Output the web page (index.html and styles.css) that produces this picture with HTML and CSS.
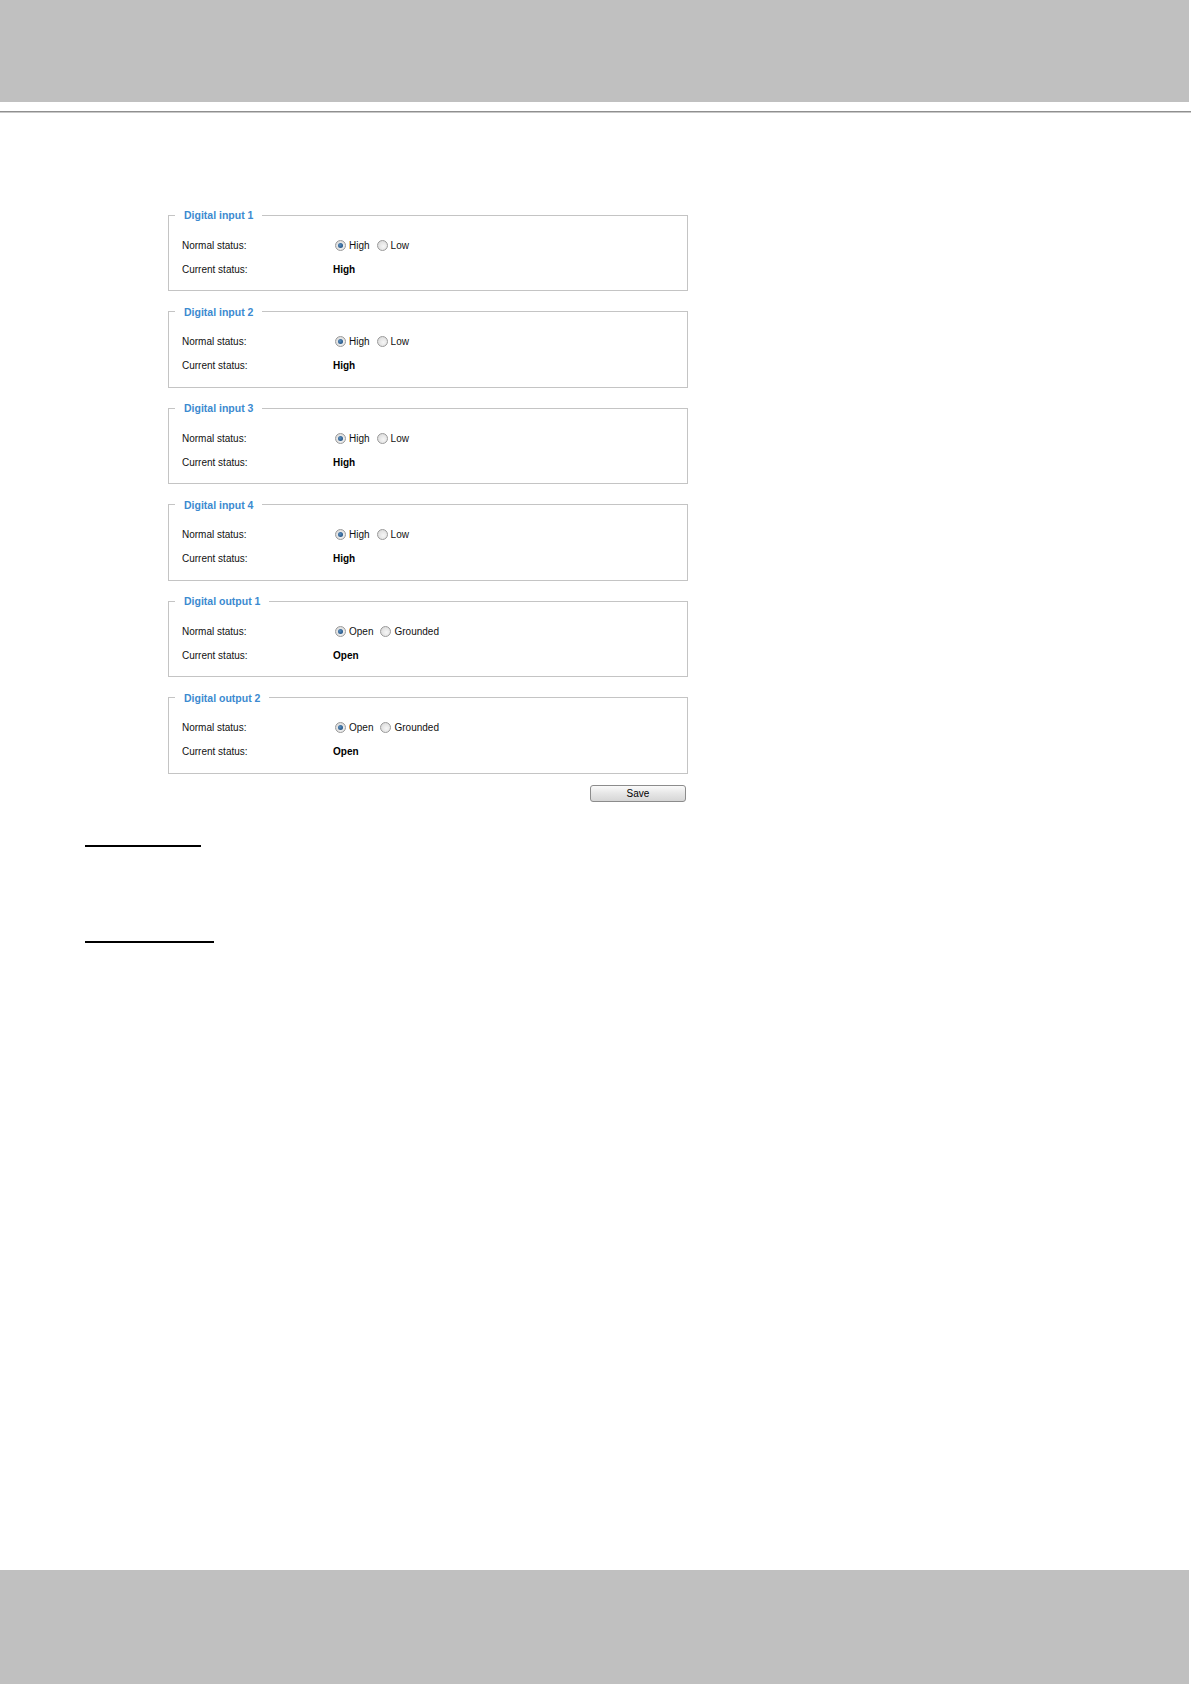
FILE: index.html
```html
<!DOCTYPE html>
<html>

<head>
	<meta charset="utf-8" />
	<title>Digital input / output</title>
	<link rel="stylesheet" href="styles.css">
</head>

<body>
	<div class="page">
		<div class="top"></div>
		<div class="rule"></div>

		<div class="main">
			<div class="io">
				<fieldset>
					<legend>Digital input 1</legend>
					<div class="rows">
						<div class="row"><span class="lbl">Normal status:</span>
							<span class="opt"><span class="radio on"></span>High</span>
							<span class="opt"><span class="radio"></span>Low</span>
						</div>
						<div class="row"><span class="lbl">Current status:</span><b>High</b></div>
					</div>
				</fieldset>
				<fieldset>
					<legend>Digital input 2</legend>
					<div class="rows">
						<div class="row"><span class="lbl">Normal status:</span>
							<span class="opt"><span class="radio on"></span>High</span>
							<span class="opt"><span class="radio"></span>Low</span>
						</div>
						<div class="row"><span class="lbl">Current status:</span><b>High</b></div>
					</div>
				</fieldset>
				<fieldset>
					<legend>Digital input 3</legend>
					<div class="rows">
						<div class="row"><span class="lbl">Normal status:</span>
							<span class="opt"><span class="radio on"></span>High</span>
							<span class="opt"><span class="radio"></span>Low</span>
						</div>
						<div class="row"><span class="lbl">Current status:</span><b>High</b></div>
					</div>
				</fieldset>
				<fieldset>
					<legend>Digital input 4</legend>
					<div class="rows">
						<div class="row"><span class="lbl">Normal status:</span>
							<span class="opt"><span class="radio on"></span>High</span>
							<span class="opt"><span class="radio"></span>Low</span>
						</div>
						<div class="row"><span class="lbl">Current status:</span><b>High</b></div>
					</div>
				</fieldset>
				<fieldset>
					<legend>Digital output 1</legend>
					<div class="rows">
						<div class="row"><span class="lbl">Normal status:</span>
							<span class="opt"><span class="radio on"></span>Open</span>
							<span class="opt"><span class="radio"></span>Grounded</span>
						</div>
						<div class="row"><span class="lbl">Current status:</span><b>Open</b></div>
					</div>
				</fieldset>
				<fieldset>
					<legend>Digital output 2</legend>
					<div class="rows">
						<div class="row"><span class="lbl">Normal status:</span>
							<span class="opt"><span class="radio on"></span>Open</span>
							<span class="opt"><span class="radio"></span>Grounded</span>
						</div>
						<div class="row"><span class="lbl">Current status:</span><b>Open</b></div>
					</div>
				</fieldset>
				<div class="actions">
					<button type="button">Save</button>
				</div>
			</div>

			<div class="head h1"></div>
			<div class="head h2"></div>
		</div>

		<div class="bottom"></div>
	</div>
</body>

</html>
```

FILE: styles.css
```css
body {
	margin:0;
	background-color:#fff;
	font-family:"Liberation Sans", Arial, sans-serif;
	color:#111;
}

.page {
	display:flex;
	flex-direction:column;
	min-height:1684px;
}

.top {
	height:102px;
	width:1189px;
	background-color:#c0c0c0;
}

.rule {
	margin-top:9px;
	height:1px;
	border-bottom:1px solid #c8c8c8;
	background-color:#8f8f8f;
}

.main {
	flex:1;
	padding-top:95px;
}

.io {
	margin-left:168px;
	width:520px;
}

fieldset {
	margin:0 0 13.5px 0;
	padding:0;
	border:1px solid #c4c4c4;
}

legend {
	margin-left:6px;
	padding:0 9px 0 9px;
	font-size:10.5px;
	line-height:14px;
	font-weight:bold;
	color:#3c8ad0;
}

.rows {
	padding:11px 0 9px 13px;
}

.row {
	display:flex;
	align-items:center;
	height:24px;
	font-size:10px;
}

.row b {
	font-weight:bold;
	color:#000;
}

.lbl {
	width:151px;
}

.opt {
	display:inline-flex;
	align-items:center;
	gap:3px;
	margin-right:7px;
}

.lbl + .opt {
	margin-left:2px;
}

.radio {
	position:relative;
	display:inline-block;
	box-sizing:border-box;
	width:11px;
	height:11px;
	border:1px solid #9a9a9a;
	border-radius:50%;
	background:radial-gradient(circle at 60% 60%, #f6f6f6 0%, #e2e2e2 60%, #cfcfcf 100%);
}

.radio.on::after {
	content:"";
	position:absolute;
	left:2px;
	top:2px;
	width:5px;
	height:5px;
	border-radius:50%;
	background:radial-gradient(circle at 40% 40%, #5a8fc0 0%, #1f4f80 80%);
}

.actions {
	display:flex;
	justify-content:flex-end;
	padding-right:2px;
	margin-top:-2px;
}

button {
	width:96px;
	height:17px;
	padding:0;
	border:1px solid #8c8c8c;
	border-radius:3px;
	background:linear-gradient(#fafafa, #e6e6e6 50%, #d6d6d6);
	font-family:"Liberation Sans", Arial, sans-serif;
	font-size:10px;
	color:#000;
}

.head {
	margin-left:85px;
	height:2px;
	background-color:#000;
}

.h1 {
	width:116px;
	margin-top:43px;
}

.h2 {
	width:129px;
	margin-top:94px;
}

.bottom {
	height:114px;
	width:1189px;
	background-color:#c0c0c0;
}
```
